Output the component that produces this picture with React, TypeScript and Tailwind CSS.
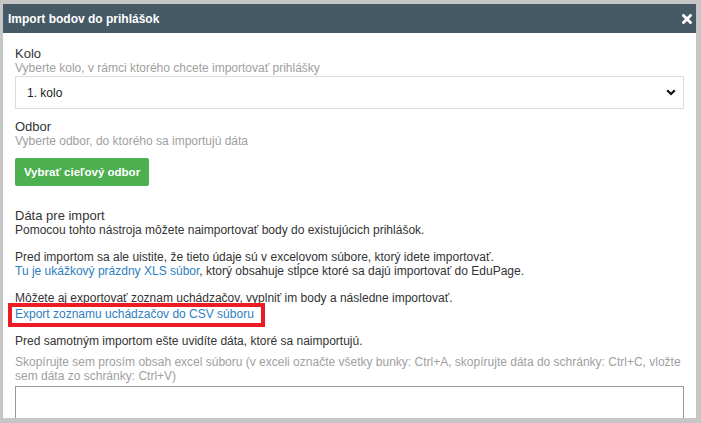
import { useState } from "react";

function CloseIcon() {
  return (
    <svg width="10" height="10" viewBox="0 0 10 10" className="block">
      <path d="M1.5 1.5 L8.5 8.5 M8.5 1.5 L1.5 8.5" stroke="white" strokeWidth="2.8" strokeLinecap="square" />
    </svg>
  );
}

function Chevron() {
  return (
    <svg width="10" height="7" viewBox="0 0 10 7" className="block">
      <path d="M1.2 1.2 L5 5 L8.8 1.2" stroke="#111" strokeWidth="2.2" fill="none" />
    </svg>
  );
}

export default function App() {
  const [kolo] = useState("1. kolo");

  return (
    <div className="w-[701px] h-[423px] bg-[#c6c6c6] pt-[4px] pl-[3px] overflow-hidden font-['Liberation_Sans',Arial,sans-serif]">
      <div className="w-[693px] h-[414px] bg-white flex flex-col overflow-hidden">
        <div className="h-[29px] shrink-0 bg-[#465a65] flex items-center justify-between pl-[5px] pr-[4px]">
          <span className="text-white font-bold text-[12px]">Import bodov do prihlášok</span>
          <CloseIcon />
        </div>

        <div className="px-[12px] pt-[14px] text-[12px] leading-[14px] text-[#333]">
          <div className="text-[13px] leading-[14px]">Kolo</div>
          <div className="text-[#a0a0a0]">Vyberte kolo, v rámci ktorého chcete importovať prihlášky</div>
          <div className="mt-[1px] h-[33px] border border-[#ddd] flex items-center justify-between pl-[11px] pr-[7px] text-[#222]">
            <span>{kolo}</span>
            <Chevron />
          </div>

          <div className="mt-[11px] text-[13px] leading-[14px]">Odbor</div>
          <div className="text-[#a0a0a0]">Vyberte odbor, do ktorého sa importujú dáta</div>
          <button className="mt-[10px] h-[28px] w-[134px] bg-[#4caf50] rounded-[2px] text-white font-bold text-[11.5px]">
            Vybrať cieľový odbor
          </button>

          <div className="mt-[23px] text-[13px] leading-[14px]">Dáta pre import</div>
          <div>Pomocou tohto nástroja môžete naimportovať body do existujúcich prihlášok.</div>

          <div className="mt-[13px]">Pred importom sa ale uistite, že tieto údaje sú v excelovom súbore, ktorý idete importovať.</div>
          <div>
            <span className="text-[#2d7ebf]">Tu je ukážkový prázdny XLS súbor</span>, ktorý obsahuje stĺpce ktoré sa dajú importovať do EduPage.
          </div>

          <div className="mt-[13px]">Môžete aj exportovať zoznam uchádzačov, vyplniť im body a následne importovať.</div>
          <div className="mt-[2px]">
            <span className="relative inline-block text-[#2d7ebf]">
              Export zoznamu uchádzačov do CSV súboru
              <span className="absolute -left-[7px] -right-[11px] -top-[4px] -bottom-[6px] border-[4px] border-[#ed1c24]" />
            </span>
          </div>

          <div className="mt-[13px]">Pred samotným importom ešte uvidíte dáta, ktoré sa naimportujú.</div>
          <div className="mt-[7px] text-[#a0a0a0]">
            Skopírujte sem prosím obsah excel súboru (v exceli označte všetky bunky: Ctrl+A, skopírujte dáta do schránky: Ctrl+C, vložte sem dáta zo schránky: Ctrl+V)
          </div>
          <div className="mt-[3px] h-[80px] border border-[#999]" />
        </div>
      </div>
    </div>
  );
}
